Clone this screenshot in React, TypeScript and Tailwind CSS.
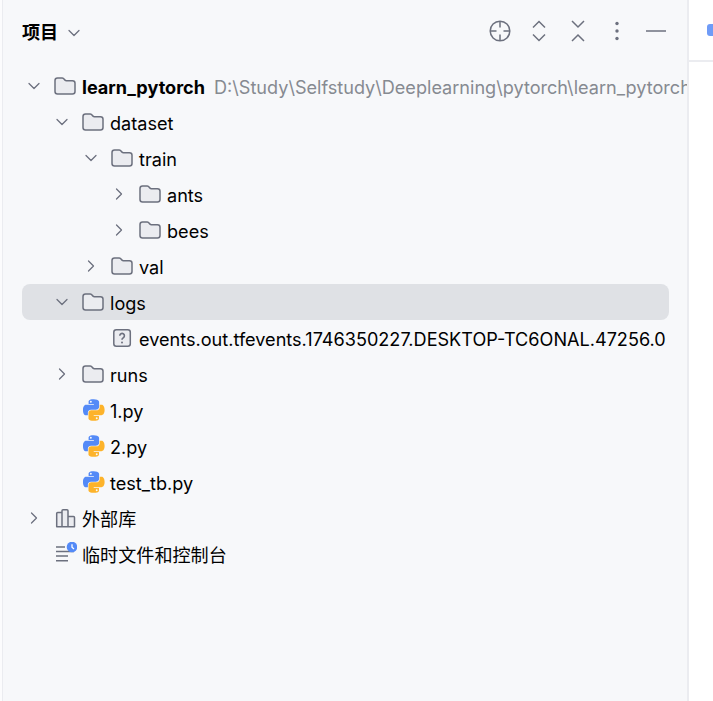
import React from 'react';
import { ChevronDown, ChevronRight } from 'lucide-react';

const FONT = "font-['Inter','Noto_Sans_CJK_SC',sans-serif]";

const FolderIcon: React.FC = () => (
    <svg width="24" height="24" viewBox="0 0 24 24" fill="none">
        <path d="M2 6.500A2.500 2.500 0 0 1 4.500 4h4.600a2 2 0 0 1 1.400.6l1.500 1.500a2 2 0 0 0 1.400.6h6.100A2.500 2.500 0 0 1 22 9.200v8.300a2.500 2.500 0 0 1-2.500 2.500h-15A2.500 2.500 0 0 1 2 17.500z" fill="#ebecf0" stroke="#6c707e" strokeWidth="1.500" />
    </svg>
);

const PythonIcon: React.FC = () => {
    const half = "M54.900 0C26.800 0 28.600 12.200 28.600 12.200v12.600h26.800v3.800H17.900S0 26.600 0 54.900s15.700 27.300 15.700 27.300h9.400V69s-.5-15.700 15.400-15.700h26.600s14.900.2 14.900-14.400V14.800S84.300 0 54.900 0zM40.100 8.500a4.800 4.800 0 1 1 0 9.600 4.800 4.800 0 0 1 0-9.600z";
    return (
        <svg width="24" height="24" viewBox="-10 -6 122 122">
            <path d={half} fill="#548af7" />
            <path d={half} fill="#fdb32a" transform="rotate(180 55 55)" />
        </svg>
    );
};

const UnknownFileIcon: React.FC = () => (
    <svg width="24" height="24" viewBox="0 0 24 24" fill="none">
        <rect x="3.800" y="3.800" width="16.500" height="16.500" rx="2.500" fill="#ebecf0" stroke="#6c707e" strokeWidth="1.500" />
        <path d="M9.800 9.700a2.300 2.300 0 1 1 3.500 2c-.9.500-1.300 1-1.300 2" stroke="#6c707e" strokeWidth="1.600" />
        <circle cx="12" cy="16.400" r="1" fill="#6c707e" />
    </svg>
);

const LibraryIcon: React.FC = () => (
    <svg width="24" height="24" viewBox="0 0 24 24" fill="none" stroke="#6c707e" strokeWidth="1.500">
        <path d="M3.700 20.700V7.500a1 1 0 0 1 1-1H9v14.200zM9 20.700V4.700a1 1 0 0 1 1-1h4a1 1 0 0 1 1 1v16zM15 20.700V10.500h5.500a1 1 0 0 1 1 1v9.200z" fill="#ebecf0" strokeLinejoin="round" />
    </svg>
);

const ScratchIcon: React.FC = () => (
    <svg width="24" height="24" viewBox="0 0 24 24" fill="none">
        <path d="M3 5h9M3 9.500h18M3 14h12M3 18.700h12" stroke="#6c707e" strokeWidth="1.500" />
        <circle cx="19" cy="5" r="5.300" fill="#548af7" />
        <path d="M19 2.200v3l2 1.700" stroke="#ffffff" strokeWidth="1.300" fill="none" />
    </svg>
);

const LocateIcon: React.FC = () => (
    <svg width="24" height="24" viewBox="0 0 24 24" fill="none" stroke="#6c707e" strokeWidth="1.500">
        <circle cx="12" cy="12" r="9.800" />
        <path d="M12 2.200v6.300M12 15.500v6.300M2.200 12h6.300M15.500 12h6.300" />
    </svg>
);

const ExpandAllIcon: React.FC = () => (
    <svg width="24" height="24" viewBox="0 0 24 24" fill="none" stroke="#6c707e" strokeWidth="1.500">
        <path d="M6 8.500l6-6 6 6M6 15.500l6 6 6-6" />
    </svg>
);

const CollapseAllIcon: React.FC = () => (
    <svg width="24" height="24" viewBox="0 0 24 24" fill="none" stroke="#6c707e" strokeWidth="1.500">
        <path d="M6 2l6 6 6-6M6 22l6-6 6 6" />
    </svg>
);

const MoreIcon: React.FC = () => (
    <svg width="24" height="24" viewBox="0 0 24 24" fill="#6c707e">
        <circle cx="12" cy="4.500" r="1.700" />
        <circle cx="12" cy="12" r="1.700" />
        <circle cx="12" cy="19.500" r="1.700" />
    </svg>
);

const MinusIcon: React.FC = () => (
    <svg width="24" height="24" viewBox="0 0 24 24" fill="none" stroke="#6c707e" strokeWidth="1.500">
        <path d="M2 12h20" />
    </svg>
);

type RowProps = {
    indent: string;
    open?: boolean;
    icon: React.ReactNode;
    selected?: boolean;
    children: React.ReactNode;
};

const Row: React.FC<RowProps> = ({ indent, open, icon, selected, children }) => (
    <div className={`flex h-9 items-center whitespace-nowrap rounded-lg ${indent} ${selected ? 'bg-[#dfe1e5]' : ''}`}>
        <span className="flex w-6 shrink-0 justify-center text-[#6c707e]">
            {open === true && <ChevronDown size={20} strokeWidth={1.500} />}
            {open === false && <ChevronRight size={20} strokeWidth={1.500} />}
        </span>
        <span className="ml-[7px] flex shrink-0">{icon}</span>
        <span className="ml-[5px] flex items-baseline pt-[2px]">{children}</span>
    </div>
);

const App: React.FC = () => (
    <div className={`flex h-[701px] w-[713px] overflow-hidden bg-white text-[18.1px] leading-none text-black ${FONT}`}>
        <div className="w-[3px] shrink-0 border-r border-[#ebecf0] bg-[#fcfcfd]" />
        <div className="flex w-[684px] shrink-0 flex-col overflow-hidden bg-[#f7f8fa]">
            <div className="flex h-[62px] shrink-0 items-center pl-[19px] pr-[19px]">
                <span className="mt-[3px] font-semibold">项目</span>
                <ChevronDown size={20} strokeWidth={1.500} className="ml-[6px] mt-[3px] text-[#6c707e]" />
                <div className="ml-auto flex items-center gap-[15px]">
                    <LocateIcon />
                    <ExpandAllIcon />
                    <CollapseAllIcon />
                    <MoreIcon />
                    <MinusIcon />
                </div>
            </div>
            <div className="ml-[19px] mr-[18px] mt-[6px] flex flex-col">
                <Row indent="pl-[0px]" open={true} icon={<FolderIcon />}>
                    <span className="font-bold">learn_pytorch</span>
                    <span className="ml-[9px] text-[#868a91]">D:\Study\Selfstudy\Deeplearning\pytorch\learn_pytorch</span>
                </Row>
                <Row indent="pl-[28px]" open={true} icon={<FolderIcon />}>dataset</Row>
                <Row indent="pl-[57px]" open={true} icon={<FolderIcon />}>train</Row>
                <Row indent="pl-[85px]" open={false} icon={<FolderIcon />}>ants</Row>
                <Row indent="pl-[85px]" open={false} icon={<FolderIcon />}>bees</Row>
                <Row indent="pl-[57px]" open={false} icon={<FolderIcon />}>val</Row>
                <Row indent="pl-[28px]" open={true} icon={<FolderIcon />} selected>logs</Row>
                <Row indent="pl-[57px]" icon={<UnknownFileIcon />}>events.out.tfevents.1746350227.DESKTOP-TC6ONAL.47256.0</Row>
                <Row indent="pl-[28px]" open={false} icon={<FolderIcon />}>runs</Row>
                <Row indent="pl-[28px]" icon={<PythonIcon />}>1.py</Row>
                <Row indent="pl-[28px]" icon={<PythonIcon />}>2.py</Row>
                <Row indent="pl-[28px]" icon={<PythonIcon />}>test_tb.py</Row>
                <Row indent="pl-[0px]" open={false} icon={<LibraryIcon />}>外部库</Row>
                <Row indent="pl-[0px]" icon={<ScratchIcon />}>临时文件和控制台</Row>
            </div>
        </div>
        <div className="flex min-w-0 flex-1 flex-col border-l-2 border-[#ebecf0]">
            <div className="flex h-[62px] shrink-0 items-center border-b-2 border-[#ebecf0] pl-[18px]">
                <span className="h-[12px] w-[12px] shrink-0 rounded-[3px] bg-[#6f9bf7]" />
            </div>
        </div>
    </div>
);

export default App;
